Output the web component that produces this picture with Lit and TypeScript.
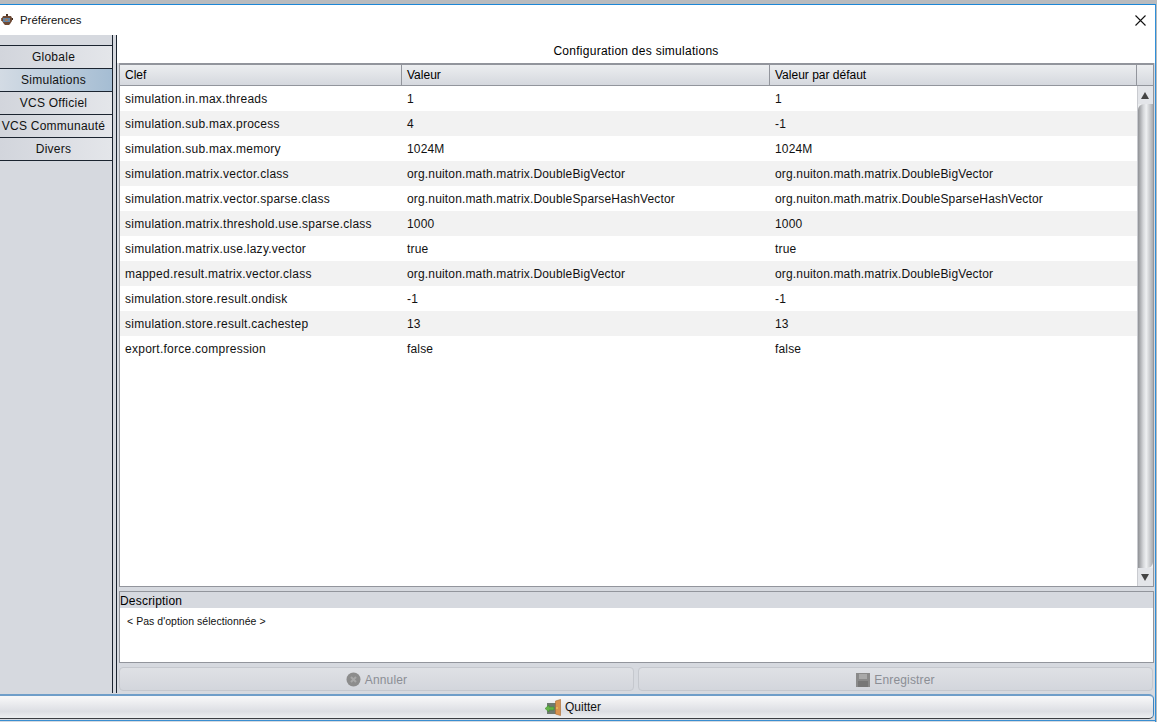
import { LitElement, html, css, svg } from "lit";
import { customElement } from "lit/decorators.js";

const rows: [string, string, string][] = [
  ["simulation.in.max.threads", "1", "1"],
  ["simulation.sub.max.process", "4", "-1"],
  ["simulation.sub.max.memory", "1024M", "1024M"],
  ["simulation.matrix.vector.class", "org.nuiton.math.matrix.DoubleBigVector", "org.nuiton.math.matrix.DoubleBigVector"],
  ["simulation.matrix.vector.sparse.class", "org.nuiton.math.matrix.DoubleSparseHashVector", "org.nuiton.math.matrix.DoubleSparseHashVector"],
  ["simulation.matrix.threshold.use.sparse.class", "1000", "1000"],
  ["simulation.matrix.use.lazy.vector", "true", "true"],
  ["mapped.result.matrix.vector.class", "org.nuiton.math.matrix.DoubleBigVector", "org.nuiton.math.matrix.DoubleBigVector"],
  ["simulation.store.result.ondisk", "-1", "-1"],
  ["simulation.store.result.cachestep", "13", "13"],
  ["export.force.compression", "false", "false"],
];
const tabs = ["Globale", "Simulations", "VCS Officiel", "VCS Communauté", "Divers"];

const appIcon = svg`<svg class="app-ico" width="12" height="12" viewBox="0 0 12 12"><rect x="5" y="0" width="2" height="2" fill="#4a3325"/><path d="M2 2h8l1 2v3l-2 3-1 1H4L3 10 1 7V4z" fill="#6e4a35"/><rect x="2" y="4" width="7" height="4" fill="#5f84a6"/><rect x="4" y="5" width="3" height="2" fill="#a87a5c"/><rect x="0" y="4" width="1" height="3" fill="#8a6a52"/><rect x="11" y="4" width="1" height="2" fill="#3d2b20"/></svg>`;
const closeIcon = svg`<svg width="11" height="11" viewBox="0 0 11 11"><path d="M0.500 0.500L10.500 10.500M10.500 0.500L0.500 10.500" stroke="#111" stroke-width="1.100" fill="none"/></svg>`;
const cancelIcon = svg`<svg width="15" height="15" viewBox="0 0 15 15"><circle cx="7.500" cy="7.500" r="7" fill="#8c8c8c"/><path d="M5 5l5 5M10 5l-5 5" stroke="#a8a8a8" stroke-width="2"/></svg>`;
const saveIcon = svg`<svg width="14" height="14" viewBox="0 0 14 14"><rect width="14" height="14" fill="#8a8a8a"/><rect x="3" y="1" width="8" height="5" fill="#a9a9a9"/><rect x="2" y="8" width="10" height="6" fill="#777"/></svg>`;
const quitIcon = svg`<svg width="17" height="17" viewBox="0 0 17 17"><rect x="2" y="4" width="9" height="11" fill="#6f7a70"/><path d="M0 9.500l4-3.500v2h5v3H4v2z" fill="#63b347" stroke="#3f8a2c" stroke-width=".5"/><path d="M10.500 2l5-1.500v16l-5-1.500z" fill="#d9924e" stroke="#a86a30" stroke-width=".6"/><rect x="11.500" y="8" width="1" height="2" fill="#f3d060"/></svg>`;

@customElement("app-root")
export class AppRoot extends LitElement {
  static styles = css`
    :host {
      display: flex;
      flex-direction: column;
      width: 1157px;
      height: 722px;
      overflow: hidden;
      background: #b9bbbe;
      font-family: "Liberation Sans", Arial, sans-serif;
      font-size: 12px;
      color: #000;
      box-sizing: border-box;
      padding-top: 4px;
    }
    .window {
      flex: 1;
      min-height: 0;
      display: flex;
      flex-direction: column;
      margin-right: 1px;
      border-top: 1px solid #1c86d6;
      border-right: 1px solid #2f8fd8;
      background: #d6d9df;
    }
    .titlebar {
      height: 30px;
      flex: none;
      background: #fff;
      display: flex;
      align-items: center;
      padding: 0 9px 0 1px;
      gap: 7px;
    }
    .app-ico { flex: none; }
    .title { flex: 1; font-size: 11.4px; color: #111; padding-bottom: 1px; }
    .close { display: flex; }
    .main { flex: none; height: 658px; display: flex; }
    .side {
      flex: none;
      width: 112px;
      padding-top: 10px;
      border-right: 1px solid #1b2430;
    }
    .tab {
      height: 22px;
      display: flex;
      align-items: center;
      justify-content: center;
      padding-right: 5px;
      border-bottom: 1px solid #1b2430;
      background: linear-gradient(90deg, #d2d5dc, #e4e6ea);
      color: #111;
      letter-spacing: 0.25px;
      white-space: nowrap;
    }
    .tab:first-child { border-top: 1px solid #1b2430; }
    .tab.sel { background: linear-gradient(90deg, #d3dbe4, #a5bdd3); }
    .gutter {
      flex: none;
      width: 3px;
      border-right: 1px solid #1b2430;
    }
    .content {
      flex: 1;
      min-width: 0;
      display: flex;
      flex-direction: column;
      padding: 0 1px 0 2px;
    }
    .heading {
      flex: none;
      height: 28px;
      background: #fff;
      margin: 0 -1px 0 -2px;
      display: flex;
      align-items: center;
      justify-content: center;
      box-sizing: border-box;
      padding-top: 4px;
      letter-spacing: 0.27px;
    }
    .table {
      flex: none;
      height: 524px;
      box-sizing: border-box;
      border: 1px solid #92959c;
      border-top: 2px solid #92959c;
      background: #fff;
      display: flex;
      flex-direction: column;
    }
    .thead {
      flex: none;
      height: 20px;
      display: grid;
      grid-template-columns: 282px 368px 367px 1fr;
      background: linear-gradient(#eceef0, #d5d8de);
      border-bottom: 1px solid #92959c;
    }
    .th {
      display: flex;
      align-items: center;
      padding-left: 5px;
      border-right: 1px solid #92959c;
    }
    .th:last-child { border-right: none; }
    .tbody { flex: 1; min-height: 0; display: flex; }
    .rows { flex: 1; min-width: 0; }
    .row {
      height: 25px;
      display: grid;
      grid-template-columns: 282px 368px 1fr;
      align-items: center;
      color: #111;
      letter-spacing: 0.16px;
    }
    .row.alt { background: #f2f2f2; }
    .row span { padding-left: 5px; white-space: nowrap; overflow: hidden; }
    .row span:first-child { letter-spacing: 0.26px; }
    .scroll {
      flex: none;
      width: 15px;
      display: flex;
      flex-direction: column;
      background: #eceef0;
      border-left: 1px solid #c9cbd0;
    }
    .arrow {
      flex: none;
      height: 18px;
      display: flex;
      align-items: center;
      justify-content: center;
      background: #e3e5e9;
      padding-right: 1px;
    }
    .thumb {
      flex: 1;
      background: linear-gradient(90deg, #8f9195, #d4d6d9 35%, #eef0f2 55%, #a9abaf);
      border-radius: 6px 0 6px 0;
    }
    .desc {
      flex: none;
      height: 72px;
      margin-top: 4px;
      box-sizing: border-box;
      border: 1px solid #92959c;
      background: #fff;
      display: flex;
      flex-direction: column;
    }
    .desc-head {
      flex: none;
      height: 16px;
      line-height: 19px;
      background: #d6d9df;
      letter-spacing: 0.2px;
    }
    .desc-body {
      padding: 7px 0 0 7px;
      font-size: 10.5px;
      letter-spacing: 0.04px;
      color: #111;
    }
    .actions {
      flex: none;
      display: grid;
      grid-template-columns: 515px 515px;
      gap: 4px;
      margin-top: 4px;
    }
    .btn {
      height: 24px;
      box-sizing: border-box;
      border: 1px solid #c5c8ce;
      border-radius: 4px;
      background: linear-gradient(#dfe1e5, #d3d6dc);
      display: flex;
      align-items: center;
      justify-content: center;
      gap: 4px;
      color: #8b8e95;
      letter-spacing: 0.15px;
      padding-top: 1px;
    }
    .quit {
      flex: none;
      height: 25px;
      margin-top: 1px;
      box-sizing: border-box;
      border: 1px solid #3a3d42;
      border-left: none;
      border-top: 2px solid #6f9ec9;
      border-right: 1px solid #3f85c0;
      border-radius: 0 5px 5px 0;
      width: 1154px;
      padding-right: 7px;
      background: linear-gradient(#f7f7f8 5%, #dcdee3 70%, #eceef0);
      display: flex;
      align-items: center;
      justify-content: center;
      gap: 3px;
      color: #111;
    }
    .edge {
      flex: 1;
      min-height: 0;
      margin-top: 1px;
      border-top: 1px solid #3a8ed0;
    }
  `;

  render() {
    return html`
      <div class="window">
        <div class="titlebar">
          ${appIcon}
          <span class="title">Préférences</span>
          <span class="close">${closeIcon}</span>
        </div>
        <div class="main">
          <div class="side">
            ${tabs.map((t) => html`<div class="tab ${t === "Simulations" ? "sel" : ""}">${t}</div>`)}
          </div>
          <div class="gutter"></div>
          <div class="content">
            <div class="heading">Configuration des simulations</div>
            <div class="table">
              <div class="thead">
                <div class="th">Clef</div>
                <div class="th">Valeur</div>
                <div class="th">Valeur par défaut</div>
                <div class="th"></div>
              </div>
              <div class="tbody">
                <div class="rows">
                  ${rows.map(
                    (r, i) => html`<div class="row ${i % 2 ? "alt" : ""}">
                      <span>${r[0]}</span><span>${r[1]}</span><span>${r[2]}</span>
                    </div>`
                  )}
                </div>
                <div class="scroll">
                  <div class="arrow">
                    <svg width="8" height="7" viewBox="0 0 8 7"><path d="M4 0L8 7H0z" fill="#444"/></svg>
                  </div>
                  <div class="thumb"></div>
                  <div class="arrow">
                    <svg width="8" height="7" viewBox="0 0 8 7"><path d="M0 0h8L4 7z" fill="#444"/></svg>
                  </div>
                </div>
              </div>
            </div>
            <div class="desc">
              <div class="desc-head">Description</div>
              <div class="desc-body">&lt; Pas d'option sélectionnée &gt;</div>
            </div>
            <div class="actions">
              <div class="btn">${cancelIcon}<span>Annuler</span></div>
              <div class="btn">${saveIcon}<span>Enregistrer</span></div>
            </div>
          </div>
        </div>
        <div class="quit">${quitIcon}<span>Quitter</span></div>
        <div class="edge"></div>
      </div>
    `;
  }
}
